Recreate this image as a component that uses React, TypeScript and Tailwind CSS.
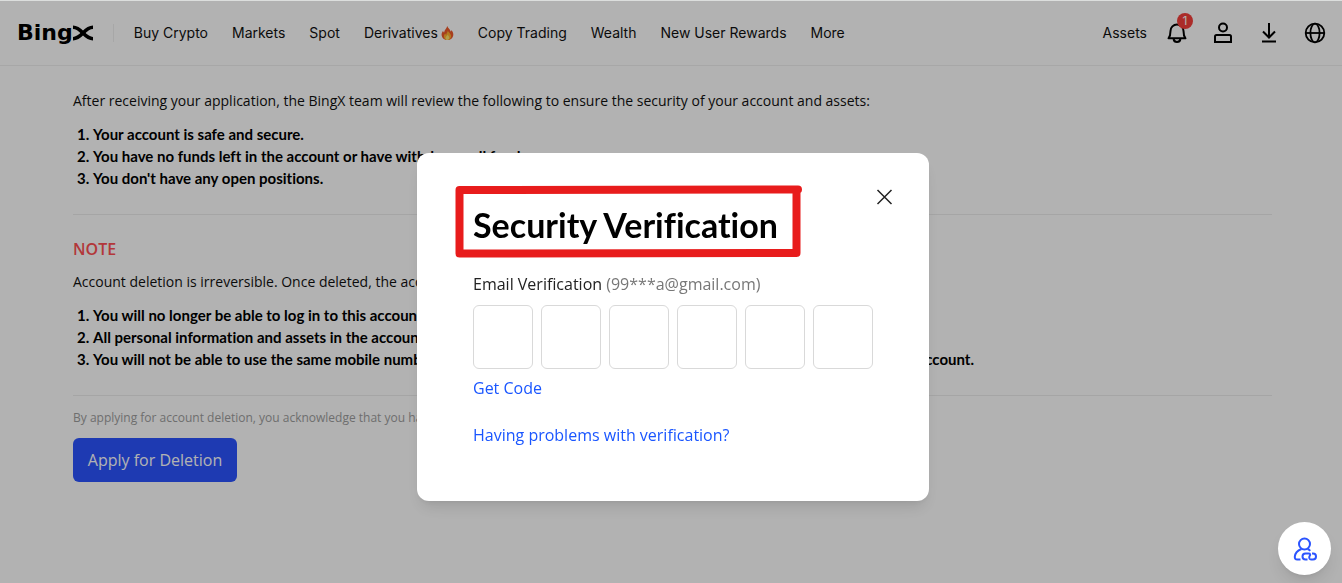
import { useState } from 'react';

const navItems = ['Buy Crypto', 'Markets', 'Spot', 'Derivatives', 'Copy Trading', 'Wealth', 'New User Rewards', 'More'];

const reviewItems = [
  'Your account is safe and secure.',
  'You have no funds left in the account or have withdrawn all funds.',
  "You don't have any open positions.",
];

const noteItems = [
  'You will no longer be able to log in to this account.',
  'All personal information and assets in the account will be deleted.',
  'You will not be able to use the same mobile number or email address to sign up again within 30 days after you delete the old account.',
];

const listClass = "mt-[11px] list-decimal pl-5 font-['Lato',sans-serif] text-[15px] font-bold text-black [font-variant-ligatures:none]";

function Logo() {
  return (
    <a href="#" aria-label="BingX" className="flex items-center text-black">
      <span className="font-['DejaVu_Sans',sans-serif] text-[22px] leading-8 font-bold">Bing</span>
      <svg width="20" height="16" viewBox="0 0 20 16" fill="none" stroke="currentColor" strokeWidth="3.6" aria-hidden="true">
        <path d="M0 2.3C9 2.3 11 13.7 20 13.7" />
        <path d="M20 2.3C11 2.3 9 13.7 0 13.7" />
      </svg>
    </a>
  );
}

function Flame() {
  return (
    <svg width="13" height="14" viewBox="0 0 13 14" aria-hidden="true">
      <path d="M6.2 0C7 2 9.3 3.4 9.6 5.6c.6-.4.8-1 .8-1.7C11.8 5.4 12.5 7.2 12.3 9c-.3 3-2.8 5-5.8 5S.8 12 .6 9c-.1-1.8.6-3.2 1.5-4.3.1.9.4 1.5 1 1.9C3.2 4 5.8 2.8 6.2 0Z" fill="#ef5a2a" />
      <path d="M6.8 4.5c.3 1.7 3.4 3 3.3 5.8-.1 2.2-1.7 3.7-3.6 3.7s-3.6-1.4-3.6-3.5c0-1.3.7-2.2 1.3-2.9.2.7.5 1.1 1 1.3.1-1.8 1.5-2.6 1.6-4.4Z" fill="#ffb02e" />
      <path d="M6.7 8.5c.3 1 1.7 1.7 1.6 3.3-.1 1.3-.9 2.2-1.9 2.2s-1.9-.9-1.9-2.1c0-1.5 1.8-1.9 2.2-3.4Z" fill="#ffe26a" />
    </svg>
  );
}

function Header() {
  return (
    <header className="flex h-[65px] items-center justify-between border-b border-[#f0f0f0] pr-[15px] pl-[17px] font-['Inter',sans-serif] text-sm text-[#111]">
      <div className="flex items-center">
        <Logo />
        <span className="mx-5 h-[18px] w-px bg-[#f0f0f0]" />
        <nav className="flex items-center gap-6">
          {navItems.map((item) => (
            <a key={item} href="#" className="flex items-center gap-[3px] whitespace-nowrap">
              {item}
              {item === 'Derivatives' && <Flame />}
            </a>
          ))}
        </nav>
      </div>

      <div className="flex items-center gap-[18px] text-black">
        <a href="#" className="text-[#111]">Assets</a>
        <div className="flex items-center gap-[22px]">
          <button type="button" aria-label="Notifications" className="relative">
            <svg width="24" height="24" viewBox="0 0 24 24" fill="none" stroke="currentColor" strokeWidth="2">
              <path d="M3.5 17.3C5 15.5 5.5 14.5 5.5 10a6.5 6.5 0 0 1 13 0c0 4.5.5 5.5 2 7.3Z" strokeLinejoin="round" />
              <path d="M8.6 18c.3 2 1.7 3 3.4 3s3.1-1 3.4-3" />
            </svg>
            <span className="absolute -top-2 left-3 flex h-4 w-4 items-center justify-center rounded-full bg-[#f53f3b] text-xs text-white">1</span>
          </button>
          <button type="button" aria-label="Account">
            <svg width="24" height="24" viewBox="0 0 24 24" fill="none" stroke="currentColor" strokeWidth="2">
              <circle cx="12" cy="6.5" r="4" />
              <path d="M4 21v-5.5A1.5 1.5 0 0 1 5.5 14h13a1.5 1.5 0 0 1 1.5 1.5V21Z" />
            </svg>
          </button>
          <button type="button" aria-label="Download">
            <svg width="24" height="24" viewBox="0 0 24 24" fill="none" stroke="currentColor" strokeWidth="2">
              <path d="M12 2v14M6 10.5l6 6 6-6M5 20.5h14" />
            </svg>
          </button>
          <button type="button" aria-label="Language">
            <svg width="24" height="24" viewBox="0 0 24 24" fill="none" stroke="currentColor" strokeWidth="1.8">
              <circle cx="12" cy="12" r="9.3" />
              <ellipse cx="12" cy="12" rx="4.6" ry="9.3" />
              <path d="M2.7 12h18.6" />
            </svg>
          </button>
        </div>
      </div>
    </header>
  );
}

function VerificationModal({ onClose }: { onClose: () => void }) {
  const [code, setCode] = useState<string[]>(Array(6).fill(''));

  const updateDigit = (index: number, value: string) => {
    setCode((prev) => prev.map((digit, i) => (i === index ? value : digit)));
  };

  return (
    <div className="fixed inset-x-0 top-px bottom-0 flex items-start justify-center bg-black/30 pt-[152px] pl-1">
      <div
        role="dialog"
        aria-labelledby="modal-title"
        className="relative w-[512px] rounded-xl bg-white px-14 pt-[52px] pb-[54px] shadow-lg"
      >
        <button type="button" onClick={onClose} aria-label="Close" className="absolute top-8 right-8 text-[#222]">
          <svg width="24" height="24" viewBox="0 0 24 24" fill="none" stroke="currentColor" strokeWidth="1.5">
            <path d="M4.5 5l14 14M18.5 5l-14 14" />
          </svg>
        </button>

        <h2 id="modal-title" className="font-['Lato',sans-serif] text-[34px] leading-10 font-bold whitespace-nowrap text-black [font-variant-ligatures:none]">
          Security Verification
        </h2>
        <svg className="absolute top-8 left-[38px]" width="348" height="74" viewBox="0 0 348 74" fill="none" stroke="#e81c1c" strokeWidth="8" strokeLinejoin="round" strokeLinecap="round" aria-hidden="true">
          <path d="M343 4.5L4.5 5v63.5L341.5 68V5" />
        </svg>

        <p id="code-label" className="mt-[27px] text-base leading-6 whitespace-nowrap text-[#222]">
          Email Verification <span className="text-[#777]">(99***a@gmail.com)</span>
        </p>
        <div className="mt-[9px] flex gap-2" role="group" aria-labelledby="code-label">
          {code.map((digit, i) => (
            <input
              key={i}
              aria-label={`Digit ${i + 1}`}
              inputMode="numeric"
              maxLength={1}
              value={digit}
              onChange={(e) => updateDigit(i, e.target.value)}
              className="h-16 w-[60px] rounded-md border border-[#d9d9d9] text-center text-2xl outline-none focus:border-[#1a56ff]"
            />
          ))}
        </div>
        <button type="button" className="mt-[7px] block text-base leading-6 text-[#1a56ff]">Get Code</button>
        <a href="#" className="mt-[23px] block text-base leading-6 text-[#1a56ff]">Having problems with verification?</a>
      </div>
    </div>
  );
}

function App() {
  const [isModalOpen, setIsModalOpen] = useState(true);

  return (
    <div className="min-h-screen border-t border-[#dcdedd] bg-white font-['Open_Sans',sans-serif] text-[#111]">
      <Header />

      <main className="pt-6 pr-[70px] pl-[73px] text-sm leading-[22px]">
        <p>After receiving your application, the BingX team will review the following to ensure the security of your account and assets:</p>
        <ol className={listClass}>
          {reviewItems.map((item) => <li key={item} className="leading-[22px]">{item}</li>)}
        </ol>

        <hr className="mt-[25px] border-[#ededed]" />

        <h3 className="mt-[22px] text-base leading-6 font-semibold text-[#ff5053]">NOTE</h3>
        <p className="mt-[10px]">Account deletion is irreversible. Once deleted, the account cannot be restored.</p>
        <ol className={listClass}>
          {noteItems.map((item) => <li key={item} className="leading-[22px]">{item}</li>)}
        </ol>

        <hr className="mt-[25px] border-[#ededed]" />

        <p className="mt-3 text-xs leading-5 text-[#9e9e9e]">
          By applying for account deletion, you acknowledge that you have read the note above.
        </p>
        <button
          type="button"
          onClick={() => setIsModalOpen(true)}
          className="mt-[10px] h-11 w-[164px] rounded-md bg-[#2b54ff] text-base text-white"
        >
          Apply for Deletion
        </button>
      </main>

      {isModalOpen && <VerificationModal onClose={() => setIsModalOpen(false)} />}

      {/* Support chat launcher */}
      <button
        type="button"
        aria-label="Customer support"
        className="fixed right-[11px] bottom-2 flex h-[53px] w-[53px] items-center justify-center rounded-full bg-white text-[#2b54ff] shadow-lg"
      >
        <svg width="24" height="24" viewBox="0 0 24 24" fill="none" stroke="currentColor" strokeWidth="2">
          <circle cx="11.5" cy="7" r="5.5" />
          <path d="M8.5 12C4.5 13.5 2 17 1.8 19.8c-.1 1.7.7 2.7 2.4 2.7h3.3M14.5 12c1.2.4 2 1 2.7 1.8" />
          <path d="M14.5 22.5h-2a3 3 0 0 1 0-6h3.2c1.600 0 1.800 1.300 1.100 2.100-.8 1-.8 1.900-.3 3 .3.600.8.900 1.500.9h2a3 3 0 0 0 0-6h-1" />
        </svg>
      </button>
    </div>
  );
}

export default App;
